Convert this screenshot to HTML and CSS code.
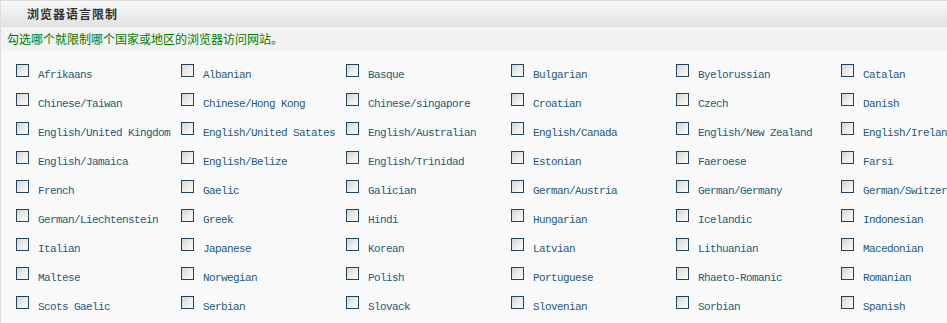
FILE: index.html
```html
<!DOCTYPE html>
<html lang="zh">
<head>
<meta charset="utf-8">
<title>浏览器语言限制</title>
<link rel="stylesheet" href="styles.css">
</head>
<body>
<div class="panel">
  <div class="panel-head">浏览器语言限制</div>
  <div class="panel-tip">勾选哪个就限制哪个国家或地区的浏览器访问网站。</div>
  <div class="lang-grid">
    <label class="item"><input type="checkbox"><span>Afrikaans</span></label>
    <label class="item"><input type="checkbox"><span>Albanian</span></label>
    <label class="item"><input type="checkbox"><span>Basque</span></label>
    <label class="item"><input type="checkbox"><span>Bulgarian</span></label>
    <label class="item"><input type="checkbox"><span>Byelorussian</span></label>
    <label class="item"><input type="checkbox"><span>Catalan</span></label>

    <label class="item"><input type="checkbox"><span>Chinese/Taiwan</span></label>
    <label class="item"><input type="checkbox"><span>Chinese/Hong Kong</span></label>
    <label class="item"><input type="checkbox"><span>Chinese/singapore</span></label>
    <label class="item"><input type="checkbox"><span>Croatian</span></label>
    <label class="item"><input type="checkbox"><span>Czech</span></label>
    <label class="item"><input type="checkbox"><span>Danish</span></label>

    <label class="item"><input type="checkbox"><span>English/United Kingdom</span></label>
    <label class="item"><input type="checkbox"><span>English/United Satates</span></label>
    <label class="item"><input type="checkbox"><span>English/Australian</span></label>
    <label class="item"><input type="checkbox"><span>English/Canada</span></label>
    <label class="item"><input type="checkbox"><span>English/New Zealand</span></label>
    <label class="item"><input type="checkbox"><span>English/Ireland</span></label>

    <label class="item"><input type="checkbox"><span>English/Jamaica</span></label>
    <label class="item"><input type="checkbox"><span>English/Belize</span></label>
    <label class="item"><input type="checkbox"><span>English/Trinidad</span></label>
    <label class="item"><input type="checkbox"><span>Estonian</span></label>
    <label class="item"><input type="checkbox"><span>Faeroese</span></label>
    <label class="item"><input type="checkbox"><span>Farsi</span></label>

    <label class="item"><input type="checkbox"><span>French</span></label>
    <label class="item"><input type="checkbox"><span>Gaelic</span></label>
    <label class="item"><input type="checkbox"><span>Galician</span></label>
    <label class="item"><input type="checkbox"><span>German/Austria</span></label>
    <label class="item"><input type="checkbox"><span>German/Germany</span></label>
    <label class="item"><input type="checkbox"><span>German/Switzerland</span></label>

    <label class="item"><input type="checkbox"><span>German/Liechtenstein</span></label>
    <label class="item"><input type="checkbox"><span>Greek</span></label>
    <label class="item"><input type="checkbox"><span>Hindi</span></label>
    <label class="item"><input type="checkbox"><span>Hungarian</span></label>
    <label class="item"><input type="checkbox"><span>Icelandic</span></label>
    <label class="item"><input type="checkbox"><span>Indonesian</span></label>

    <label class="item"><input type="checkbox"><span>Italian</span></label>
    <label class="item"><input type="checkbox"><span>Japanese</span></label>
    <label class="item"><input type="checkbox"><span>Korean</span></label>
    <label class="item"><input type="checkbox"><span>Latvian</span></label>
    <label class="item"><input type="checkbox"><span>Lithuanian</span></label>
    <label class="item"><input type="checkbox"><span>Macedonian</span></label>

    <label class="item"><input type="checkbox"><span>Maltese</span></label>
    <label class="item"><input type="checkbox"><span>Norwegian</span></label>
    <label class="item"><input type="checkbox"><span>Polish</span></label>
    <label class="item"><input type="checkbox"><span>Portuguese</span></label>
    <label class="item"><input type="checkbox"><span>Rhaeto-Romanic</span></label>
    <label class="item"><input type="checkbox"><span>Romanian</span></label>

    <label class="item"><input type="checkbox"><span>Scots Gaelic</span></label>
    <label class="item"><input type="checkbox"><span>Serbian</span></label>
    <label class="item"><input type="checkbox"><span>Slovack</span></label>
    <label class="item"><input type="checkbox"><span>Slovenian</span></label>
    <label class="item"><input type="checkbox"><span>Sorbian</span></label>
    <label class="item"><input type="checkbox"><span>Spanish</span></label>
  </div>
</div>
</body>
</html>
```

FILE: styles.css
```css
html, body {
  margin: 0;
  padding: 0;
  background: #f9f9f9;
  overflow: hidden;
}

.panel {
  width: 1100px;
  min-height: 323px;
  border-left: 1px solid #dcdcdc;
  background: #f9f9f9;
}

.panel-head {
  height: 26px;
  line-height: 26px;
  border-top: 1px solid #dddddd;
  background: linear-gradient(to bottom, #f8f8f8, #e1e1e1);
  padding-left: 26px;
  font-family: "Noto Sans CJK SC", sans-serif;
  font-size: 12px;
  font-weight: bold;
  letter-spacing: 1px;
  color: #333333;
}

.panel-tip {
  height: 24px;
  line-height: 24px;
  background: #f2f2f2;
  padding-left: 6px;
  font-family: "Noto Sans CJK SC", sans-serif;
  font-size: 12px;
  color: #017a01;
}

.lang-grid {
  display: grid;
  grid-template-columns: repeat(6, 165px);
  grid-auto-rows: 29px;
  padding: 13px 0 0 15px;
}

.item {
  display: flex;
  align-items: flex-start;
  white-space: nowrap;
}

.item input {
  appearance: none;
  -webkit-appearance: none;
  width: 13px;
  height: 13px;
  margin: 0 9px 0 0;
  flex: none;
  border: 1px solid #1c4663;
  background: linear-gradient(135deg, #d2d2ce 0%, #ebebe8 50%, #fbfbfb 100%);
  box-sizing: border-box;
}

.item span {
  padding-top: 1px;
  font-family: "Liberation Mono", "Noto Sans CJK SC", monospace;
  font-size: 11px;
  letter-spacing: -0.6px;
  line-height: 20px;
  color: #1d5b7a;
}
```
